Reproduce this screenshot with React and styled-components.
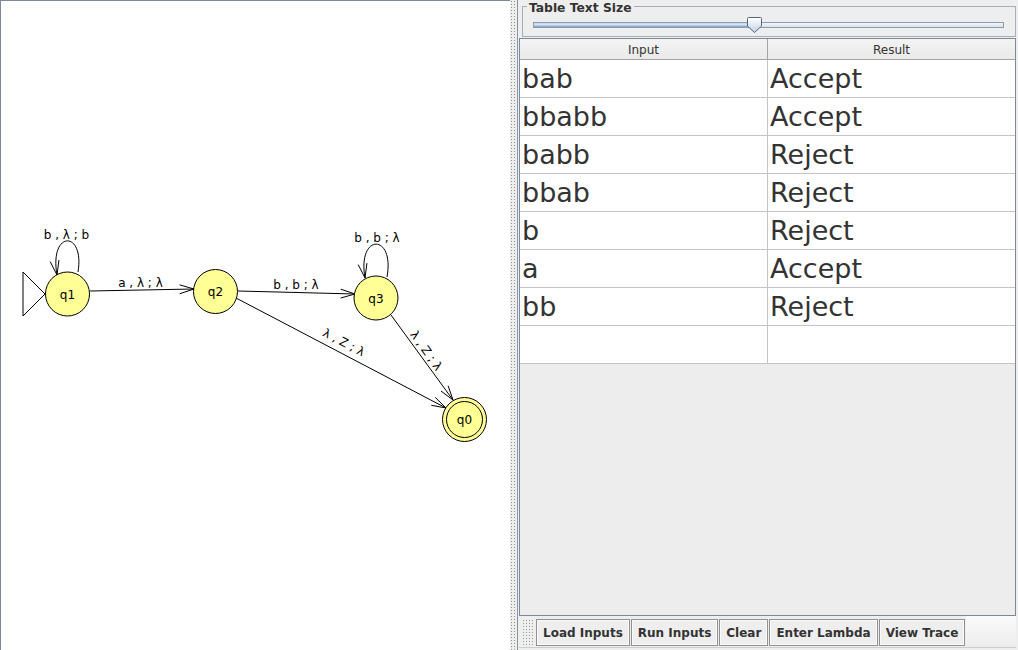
import React from 'react';
import styled, { createGlobalStyle } from 'styled-components';

const Global = createGlobalStyle`
  html, body { margin: 0; padding: 0; background: #eeeeee; overflow: hidden; }
  body { font-family: "DejaVu Sans", "Liberation Sans", sans-serif; }
  * { box-sizing: border-box; }
`;

const Frame = styled.div`
  display: flex;
  width: 1018px;
  height: 650px;
`;

const Canvas = styled.div`
  flex: none;
  width: 510px;
  height: 650px;
  border-top: 1px solid #7a8a99;
  border-left: 1px solid #7a8a99;
  background: #ffffff;
  svg { display: block; }
`;

const Divider = styled.div`
  flex: none;
  width: 7px;
  height: 650px;
  background-color: #eeeeee;
  background-image: radial-gradient(circle, #8e8e8e 0.7px, transparent 0.95px);
  background-size: 3px 3px;
  background-position: 0 0;
`;

const RightPanel = styled.div`
  flex: 1;
  min-width: 0;
  display: flex;
  flex-direction: column;
  border-left: 1px solid #8796a6;
  padding: 0 2px 0 1px;
  background: #eeeeee;
`;

const Group = styled.div`
  position: relative;
  flex: none;
  height: 31px;
  margin: 6px 0 1px 3px;
  border: 1px solid #a6adb6;
  padding: 15px 11px 0 10px;
`;

const GroupTitle = styled.span`
  position: absolute;
  top: -6px;
  left: 4px;
  padding: 0 2px;
  background: #eeeeee;
  color: #333333;
  font: bold 12.3px/15px "DejaVu Sans", sans-serif;
`;

const Track = styled.div`
  position: relative;
  height: 6px;
  border: 1px solid #8a9cb2;
  background: linear-gradient(#f4f6f9, #d9e0e9);
`;

const TrackFill = styled.div`
  height: 100%;
  background: linear-gradient(#c2d3ea, #dbe6f3 45%, #7594c8);
`;

const Thumb = styled.svg`
  position: absolute;
  top: -6px;
  width: 15px;
  height: 16px;
  overflow: visible;
`;

const TableBox = styled.div`
  flex: 1;
  min-height: 0;
  display: flex;
  flex-direction: column;
  border: 1px solid #7a8a99;
  background: #ededed;
`;

const GridRow = styled.div`
  display: grid;
  grid-template-columns: 248px 1fr;
`;

const HeadCell = styled.div`
  height: 21px;
  padding-top: 2px;
  border-bottom: 1px solid #a4a4a4;
  border-right: ${p => (p.$last ? 'none' : '1px solid #a4a4a4')};
  background: linear-gradient(#f3f3f3, #e9e9e9);
  color: #333333;
  font: 12px/19px "DejaVu Sans", sans-serif;
  text-align: center;
`;

const Cell = styled.div`
  height: 38px;
  padding-left: 2px;
  border-bottom: 1px solid #c4c4c4;
  border-right: ${p => (p.$last ? 'none' : '1px solid #c4c4c4')};
  background: #ffffff;
  color: #333333;
  font: 27px/37px "DejaVu Sans", sans-serif;
  white-space: nowrap;
  overflow: hidden;
`;

const Toolbar = styled.div`
  flex: none;
  display: flex;
  align-items: flex-start;
  height: 32px;
  margin-bottom: 2px;
  border-bottom: 1px solid #cdcdcd;
`;

const Grip = styled.div`
  flex: none;
  width: 12px;
  height: 27px;
  margin: 3px 2px 0 3px;
  background-color: #eeeeee;
  background-image: radial-gradient(circle, #9a9a9a 0.7px, transparent 0.95px);
  background-size: 3px 3px;
`;

const ToolButton = styled.button`
  flex: none;
  height: 27px;
  margin: 3px 1px 0 0;
  padding: 0 6px;
  border: 1px solid #909090;
  box-shadow: inset 0 0 0 1px #fbfbfb;
  background: #eeeeee;
  color: #333333;
  font: bold 12px "DejaVu Sans", sans-serif;
  cursor: pointer;
`;

const ToolFill = styled.div`
  flex: 1;
  align-self: stretch;
  background: linear-gradient(#fbfbfb, #ececec);
`;

const NODE_FILL = '#ffff96';

const nodes = [
  { id: 'q1', x: 67.5, y: 294 },
  { id: 'q2', x: 215.5, y: 291.5 },
  { id: 'q3', x: 376, y: 298 },
  { id: 'q0', x: 464.5, y: 419.5, final: true },
];

function arrowHead(tx, ty, fx, fy, len = 15, spread = 0.3) {
  const a = Math.atan2(ty - fy, tx - fx);
  const p1 = [tx - len * Math.cos(a - spread), ty - len * Math.sin(a - spread)];
  const p2 = [tx - len * Math.cos(a + spread), ty - len * Math.sin(a + spread)];
  return `M${p1[0]},${p1[1]} L${tx},${ty} L${p2[0]},${p2[1]}`;
}

const edges = [
  { from: [90, 291], to: [194, 289] },
  { from: [238, 291], to: [355, 294] },
  { from: [236, 298], to: [446, 408] },
  { from: [391, 315], to: [453, 400] },
];

const labels = [
  { text: 'b , λ ; b', x: 66.5, y: 238.5 },
  { text: 'a , λ ; λ', x: 140.5, y: 287 },
  { text: 'b , b ; λ', x: 296, y: 289 },
  { text: 'b , b ; λ', x: 377, y: 242 },
  { text: 'λ , Z ; λ', x: 342, y: 346, rot: 27.65 },
  { text: 'λ , Z ; λ', x: 423, y: 353, rot: 54.35 },
];

const loops = [
  { d: 'M57,275 C49,230 85,230 78,272', tip: [57, 275], ctrl: [51, 240] },
  { d: 'M365,278 C357,233 395,233 387,277', tip: [365, 278], ctrl: [359, 243] },
];

function Diagram() {
  return (
    <svg width="509" height="649" viewBox="1 1 509 649" fontFamily='"DejaVu Sans", sans-serif' fontSize="12">
      <polygon points="23,272 23,316 45,294" fill="#ffffff" stroke="#000" strokeWidth="1" />
      {edges.map((e, i) => (
        <g key={i} stroke="#000" strokeWidth="1" fill="none">
          <line x1={e.from[0]} y1={e.from[1]} x2={e.to[0]} y2={e.to[1]} />
          <path d={arrowHead(e.to[0], e.to[1], e.from[0], e.from[1])} />
        </g>
      ))}
      {loops.map((l, i) => (
        <g key={i} stroke="#000" strokeWidth="1" fill="none">
          <path d={l.d} />
          <path d={arrowHead(l.tip[0], l.tip[1], l.ctrl[0], l.ctrl[1], 15, 0.3)} />
        </g>
      ))}
      {nodes.map(n => (
        <g key={n.id}>
          <circle cx={n.x} cy={n.y} r="22" fill={NODE_FILL} stroke="#000" strokeWidth="1" />
          {n.final && <circle cx={n.x} cy={n.y} r="18" fill="none" stroke="#000" strokeWidth="1" />}
          <text x={n.x} y={n.y + 4.5} textAnchor="middle" fill="#000">{n.id}</text>
        </g>
      ))}
      {labels.map((l, i) => (
        <text
          key={i}
          x={l.x}
          y={l.y}
          textAnchor="middle"
          fill="#000"
          transform={l.rot ? `rotate(${l.rot} ${l.x} ${l.y})` : undefined}
        >
          {l.text}
        </text>
      ))}
    </svg>
  );
}

const rows = [
  ['bab', 'Accept'],
  ['bbabb', 'Accept'],
  ['babb', 'Reject'],
  ['bbab', 'Reject'],
  ['b', 'Reject'],
  ['a', 'Accept'],
  ['bb', 'Reject'],
  ['', ''],
];

const SLIDER_POS = 221;

export default function App() {
  return (
    <>
      <Global />
      <Frame>
        <Canvas>
          <Diagram />
        </Canvas>
        <Divider />
        <RightPanel>
          <Group>
            <GroupTitle>Table Text Size</GroupTitle>
            <Track>
              <TrackFill style={{ width: SLIDER_POS }} />
              <Thumb style={{ left: SLIDER_POS - 8 }} viewBox="0 0 15 16">
                <defs>
                  <linearGradient id="thumbg" x1="0" y1="0" x2="0" y2="1">
                    <stop offset="0" stopColor="#ffffff" />
                    <stop offset="1" stopColor="#c3d2e4" />
                  </linearGradient>
                </defs>
                <path
                  d="M1.5 0.5 H13.5 Q14.5 0.5 14.5 1.5 V9 L7.5 15.5 L0.5 9 V1.5 Q0.5 0.5 1.5 0.5 Z"
                  fill="url(#thumbg)"
                  stroke="#55657a"
                  strokeWidth="1"
                />
              </Thumb>
            </Track>
          </Group>
          <TableBox>
            <GridRow>
              <HeadCell>Input</HeadCell>
              <HeadCell $last>Result</HeadCell>
            </GridRow>
            {rows.map((r, i) => (
              <GridRow key={i}>
                <Cell>{r[0]}</Cell>
                <Cell $last>{r[1]}</Cell>
              </GridRow>
            ))}
          </TableBox>
          <Toolbar>
            <Grip />
            <ToolButton>Load Inputs</ToolButton>
            <ToolButton>Run Inputs</ToolButton>
            <ToolButton>Clear</ToolButton>
            <ToolButton>Enter Lambda</ToolButton>
            <ToolButton>View Trace</ToolButton>
            <ToolFill />
          </Toolbar>
        </RightPanel>
      </Frame>
    </>
  );
}
